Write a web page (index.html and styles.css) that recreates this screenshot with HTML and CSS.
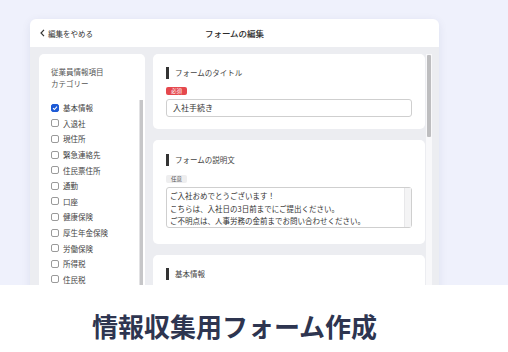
FILE: index.html
```html
<!DOCTYPE html>
<html lang="ja">
<head>
    <meta charset="UTF-8">
    <meta name="viewport" content="width=device-width, initial-scale=1.0">
    <title>情報収集用フォーム作成</title>
    <link rel="stylesheet" href="styles.css">
</head>
<body>

    <div class="hero">
        <div class="window">
            <div class="window__header">
                <a class="back-link" href="#">
                    <svg width="5" height="8" viewBox="0 0 5 8"><path d="M4 0.8 L1 4 L4 7.2" fill="none" stroke="#333" stroke-width="1.2"/></svg>
                    編集をやめる
                </a>
                <div class="window__title">フォームの編集</div>
                <div></div>
            </div>

            <div class="window__body">
                <!-- left: category list -->
                <aside class="sidebar">
                    <p class="sidebar__title">従業員情報項目<br>カテゴリー</p>
                    <ul class="category-list">
                        <li class="category"><span class="checkbox checkbox--on"><svg width="6" height="6" viewBox="0 0 6 6"><path d="M1 3.1 L2.4 4.5 L5 1.6" fill="none" stroke="#fff" stroke-width="1.1"/></svg></span>基本情報</li>
                        <li class="category"><span class="checkbox"></span>入退社</li>
                        <li class="category"><span class="checkbox"></span>現住所</li>
                        <li class="category"><span class="checkbox"></span>緊急連絡先</li>
                        <li class="category"><span class="checkbox"></span>住民票住所</li>
                        <li class="category"><span class="checkbox"></span>通勤</li>
                        <li class="category"><span class="checkbox"></span>口座</li>
                        <li class="category"><span class="checkbox"></span>健康保険</li>
                        <li class="category"><span class="checkbox"></span>厚生年金保険</li>
                        <li class="category"><span class="checkbox"></span>労働保険</li>
                        <li class="category"><span class="checkbox"></span>所得税</li>
                        <li class="category"><span class="checkbox"></span>住民税</li>
                    </ul>
                    <span class="sidebar__scroll"></span>
                </aside>

                <!-- right: form cards -->
                <main class="cards">
                    <section class="card">
                        <h3 class="card__title">フォームのタイトル</h3>
                        <span class="badge badge--required">必須</span>
                        <div class="field">入社手続き</div>
                    </section>

                    <section class="card card--desc">
                        <h3 class="card__title">フォームの説明文</h3>
                        <span class="badge">任意</span>
                        <div class="field field--area">
                            <p>ご入社おめでとうございます！<br>こちらは、入社日の3日前までにご提出ください。<br>ご不明点は、人事労務の金前までお問い合わせください。</p>
                            <span class="field__track"></span>
                        </div>
                    </section>

                    <section class="card">
                        <h3 class="card__title">基本情報</h3>
                    </section>
                </main>

                <div class="scrollbar"><span class="scrollbar__thumb"></span></div>
            </div>
        </div>
    </div>

    <div class="caption">
        <h1>情報収集用フォーム作成</h1>
    </div>

</body>
</html>
```

FILE: styles.css
```css
* {
    margin: 0;
    padding: 0;
    box-sizing: border-box;
}

body {
    width: 508px;
    height: 352px;
    overflow: hidden;
    font-family: "Noto Sans CJK JP", "Noto Sans", sans-serif;
    background: #fff;
    color: #444;
}

.hero {
    height: 285px;
    overflow: hidden;
    background: #eff1fc;
    padding: 19px 0 0 30px;
}

.window {
    width: 409px;
    background: #fff;
    border-radius: 6px 6px 0 0;
    box-shadow: 0 2px 10px rgba(30, 40, 90, 0.08);
}

.window__header {
    height: 28px;
    display: grid;
    grid-template-columns: 1fr auto 1fr;
    align-items: center;
    padding: 0 10px;
}

.back-link {
    display: flex;
    align-items: center;
    gap: 3px;
    font-size: 7.5px;
    color: #333;
    text-decoration: none;
}

.window__title {
    font-size: 8.5px;
    font-weight: 500;
    color: #2a2a2a;
}

.window__body {
    height: 250px;
    background: #ecedf1;
    display: flex;
    padding: 7px 7px 0 9px;
}

.sidebar {
    position: relative;
    width: 106px;
    flex-shrink: 0;
    background: #fff;
    border-radius: 5px 5px 0 0;
    padding: 12px 0 0 12px;
}

.sidebar__title {
    font-size: 7.5px;
    line-height: 12px;
    color: #555;
    margin-bottom: 10px;
}

.sidebar__scroll {
    position: absolute;
    top: 46px;
    right: 2px;
    bottom: 0;
    width: 4px;
    background: #c6c6c8;
    border-left: 1px solid #e2e2e4;
}

.category-list {
    list-style: none;
}

.category {
    display: flex;
    align-items: center;
    gap: 4px;
    height: 15.6px;
    font-size: 7.5px;
    color: #444;
}

.checkbox {
    width: 8px;
    height: 8px;
    border: 1px solid #9a9a9a;
    border-radius: 2px;
    display: flex;
    align-items: center;
    justify-content: center;
}

.checkbox--on {
    background: #1e5bd6;
    border-color: #1e5bd6;
}

.cards {
    width: 272px;
    margin-left: 8px;
    display: flex;
    flex-direction: column;
    gap: 11px;
}

.card {
    background: #fff;
    border-radius: 5px;
    padding: 13px 13px 12px;
}

.card--desc {
    padding-top: 14px;
    padding-bottom: 16px;
}

.card__title {
    font-size: 7.5px;
    font-weight: 400;
    color: #444;
    border-left: 3px solid #333;
    padding-left: 6px;
    line-height: 12px;
    margin-bottom: 8px;
}

.card--desc .card__title {
    margin-bottom: 9px;
}

.badge {
    display: block;
    width: fit-content;
    font-size: 5.5px;
    line-height: 8px;
    padding: 0 5px;
    border-radius: 2px;
    background: #eeeeef;
    color: #555;
    margin-bottom: 4px;
}

.badge--required {
    background: #e5484d;
    color: #fff;
}

.field {
    border: 1px solid #cfcfcf;
    border-radius: 3px;
    height: 18px;
    font-size: 8px;
    line-height: 16px;
    padding: 0 6px;
    color: #333;
}

.field--area {
    position: relative;
    height: 41px;
    font-size: 7.5px;
    line-height: 12.5px;
    padding: 2px 3px;
}

.field__track {
    position: absolute;
    top: 0;
    right: 0;
    bottom: 0;
    width: 7px;
    background: #f4f4f5;
    border-left: 1px solid #e8e8ea;
}

.scrollbar {
    width: 6px;
    margin-left: 1px;
    background: #f8f8fa;
    padding: 1px 1px 0;
}

.scrollbar__thumb {
    display: block;
    height: 82px;
    background: #bdbdbf;
    border-radius: 1px;
}

.caption {
    width: 469px;
    padding-top: 25px;
    text-align: center;
}

.caption h1 {
    font-size: 26px;
    font-weight: 700;
    color: #2e3550;
    line-height: 32px;
}
```
